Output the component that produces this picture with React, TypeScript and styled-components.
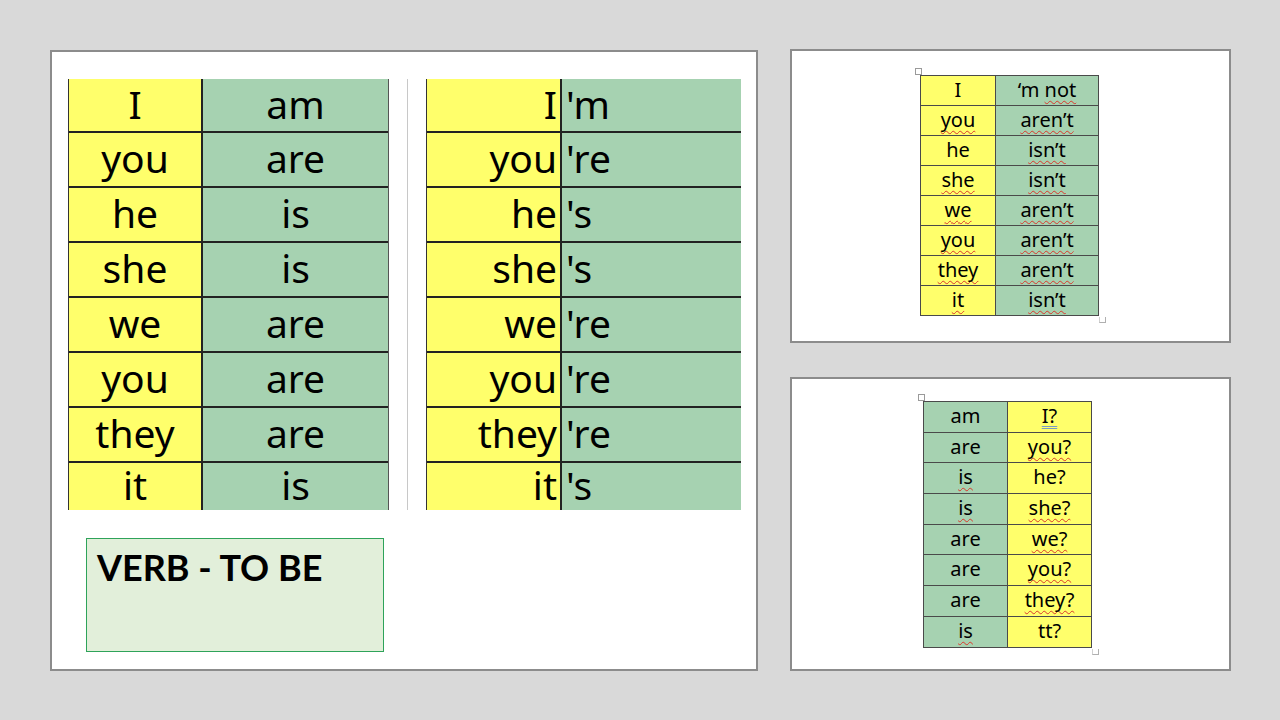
import React from 'react';
import styled, { createGlobalStyle } from 'styled-components';

const GlobalStyle = createGlobalStyle`
  html, body { margin: 0; padding: 0; }
  body {
    width: 1280px;
    height: 720px;
    overflow: hidden;
    background: #d9d9d9;
    font-family: "Comic Sans MS", "Noto Sans", sans-serif;
    color: #000;
  }
`;

const YELLOW = '#ffff6b';
const GREEN = '#a6d2b1';

type Mark = 'red' | 'blue' | undefined;

const pronouns = ['I', 'you', 'he', 'she', 'we', 'you', 'they', 'it'];
const forms = ['am', 'are', 'is', 'is', 'are', 'are', 'are', 'is'];
const shorts = ["'m", "'re", "'s", "'s", "'re", "'re", "'re", "'s"];

// [pronoun, mark, prefix, negative]
const negatives: [string, Mark, string, string][] = [
  ['I', undefined, '‘m ', 'not'],
  ['you', 'red', '', 'aren’t'],
  ['he', undefined, '', 'isn’t'],
  ['she', 'red', '', 'isn’t'],
  ['we', 'red', '', 'aren’t'],
  ['you', 'red', '', 'aren’t'],
  ['they', 'red', '', 'aren’t'],
  ['it', 'red', '', 'isn’t'],
];

const questions: [string, Mark, string, Mark][] = [
  ['am', undefined, 'I?', 'blue'],
  ['are', undefined, 'you?', 'red'],
  ['is', 'red', 'he?', undefined],
  ['is', 'red', 'she?', 'red'],
  ['are', undefined, 'we?', 'red'],
  ['are', undefined, 'you?', 'red'],
  ['are', undefined, 'they?', 'red'],
  ['is', 'red', 'tt?', undefined],
];

function App() {
  return (
    <>
      <GlobalStyle />
      <Slide>
        <Panel $w={708} $h={621}>
          <LeftContent>
            <TablesRow>
              <BigTable $w={321} $cols="134px 1fr" $right>
                {pronouns.map((p, i) => (
                  <React.Fragment key={i}>
                    <BigCell $bg={YELLOW} $first={i === 0} $divider>{p}</BigCell>
                    <BigCell $bg={GREEN} $first={i === 0}>{forms[i]}</BigCell>
                  </React.Fragment>
                ))}
              </BigTable>
              <Divider />
              <BigTable $w={315} $cols="135px 1fr">
                {pronouns.map((p, i) => (
                  <React.Fragment key={i}>
                    <BigCell $bg={YELLOW} $first={i === 0} $divider $align="right">{p}</BigCell>
                    <BigCell $bg={GREEN} $first={i === 0} $align="left">{shorts[i]}</BigCell>
                  </React.Fragment>
                ))}
              </BigTable>
            </TablesRow>
            <TitleBox>VERB - TO BE</TitleBox>
          </LeftContent>
        </Panel>

        <RightColumn>
          <Panel $w={441} $h={294}>
            <SmallArea $top={24} $shift={2}>
              <SmallWrap>
                <MoveHandle />
                <SmallTable $cols="75px 103px" $rowH={30}>
                  {negatives.map(([p, m, pre, neg], i) => (
                    <React.Fragment key={i}>
                      <SmallCell $bg={YELLOW}><Word $mark={m}>{p}</Word></SmallCell>
                      <SmallCell $bg={GREEN}>
                        {pre && <span>{pre}</span>}
                        <Word $mark="red">{neg}</Word>
                      </SmallCell>
                    </React.Fragment>
                  ))}
                </SmallTable>
                <Corner />
              </SmallWrap>
            </SmallArea>
          </Panel>
          <Panel $w={441} $h={294}>
            <SmallArea $top={22} $shift={6}>
              <SmallWrap>
                <MoveHandle />
                <SmallTable $cols="84px 84px" $rowH={30.7}>
                  {questions.map(([v, vm, q, qm], i) => (
                    <React.Fragment key={i}>
                      <SmallCell $bg={GREEN}><Word $mark={vm}>{v}</Word></SmallCell>
                      <SmallCell $bg={YELLOW}><Word $mark={qm}>{q}</Word></SmallCell>
                    </React.Fragment>
                  ))}
                </SmallTable>
                <Corner />
              </SmallWrap>
            </SmallArea>
          </Panel>
        </RightColumn>
      </Slide>
    </>
  );
}

export default App;

const Slide = styled.div`
  box-sizing: border-box;
  width: 1280px;
  height: 720px;
  padding: 50px 0 0 50px;
  display: flex;
  gap: 32px;
  align-items: flex-start;
`;

const RightColumn = styled.div`
  display: flex;
  flex-direction: column;
  gap: 34px;
  margin-top: -1px;
`;

const Panel = styled.div<{ $w: number; $h: number }>`
  box-sizing: border-box;
  width: ${p => p.$w}px;
  height: ${p => p.$h}px;
  background: #fff;
  border: 2px solid #8c8c8c;
`;

const LeftContent = styled.div`
  padding: 27px 0 0 16px;
  display: flex;
  flex-direction: column;
`;

const TablesRow = styled.div`
  display: flex;
  height: 431px;
`;

const Divider = styled.div`
  width: 1px;
  margin: 0 18px;
  background: #c8c8c8;
`;

const BigTable = styled.div<{ $w: number; $cols: string; $right?: boolean }>`
  box-sizing: border-box;
  width: ${p => p.$w}px;
  display: grid;
  grid-template-columns: ${p => p.$cols};
  grid-template-rows: 52px repeat(6, 55px) 49px;
  border-left: 1px solid #333;
  border-right: ${p => (p.$right ? '1px solid #555' : 'none')};
`;

const BigCell = styled.div<{ $bg: string; $first?: boolean; $divider?: boolean; $align?: 'left' | 'right' }>`
  background: ${p => p.$bg};
  border-top: ${p => (p.$first ? 'none' : '2px solid #222')};
  border-right: ${p => (p.$divider ? '2px solid #222' : 'none')};
  display: flex;
  align-items: center;
  justify-content: ${p => (p.$align === 'left' ? 'flex-start' : p.$align === 'right' ? 'flex-end' : 'center')};
  padding: ${p => (p.$align === 'left' ? '0 0 4px 4px' : p.$align === 'right' ? '0 3px 4px 0' : '0 0 4px 0')};
  font-size: 39px;
  line-height: 1;
`;

const TitleBox = styled.div`
  box-sizing: border-box;
  width: 298px;
  height: 114px;
  margin: 28px 0 0 18px;
  background: #e2efda;
  border: 1px solid #2ea35a;
  padding: 8px 0 0 10px;
  font-family: Lato, "Open Sans", sans-serif;
  font-weight: 700;
  font-size: 36px;
  line-height: 40px;
`;

const SmallArea = styled.div<{ $top: number; $shift: number }>`
  padding-top: ${p => p.$top}px;
  padding-right: ${p => p.$shift}px;
  display: flex;
  justify-content: center;
`;

const SmallWrap = styled.div`
  position: relative;
`;

const SmallTable = styled.div<{ $cols: string; $rowH: number }>`
  display: grid;
  grid-template-columns: ${p => p.$cols};
  grid-auto-rows: ${p => p.$rowH}px;
  border-top: 1px solid #4a4a4a;
  border-left: 1px solid #4a4a4a;
`;

const SmallCell = styled.div<{ $bg: string }>`
  background: ${p => p.$bg};
  border-right: 1px solid #4a4a4a;
  border-bottom: 1px solid #4a4a4a;
  display: flex;
  align-items: center;
  justify-content: center;
  font-size: 20px;
  line-height: 1;
  padding-bottom: 2px;
  white-space: pre;
`;

const Word = styled.span<{ $mark?: Mark }>`
  text-decoration: ${p =>
    p.$mark === 'red' ? 'underline wavy #d9362b' : p.$mark === 'blue' ? 'underline double #7a9cc4' : 'none'};
  text-decoration-thickness: 1px;
  text-underline-offset: 3px;
  text-decoration-skip-ink: none;
`;

const MoveHandle = styled.div`
  position: absolute;
  left: -5px;
  top: -7px;
  width: 5px;
  height: 5px;
  border: 1px solid #9a9a9a;
  background: #fff;
`;

const Corner = styled.div`
  position: absolute;
  right: -7px;
  bottom: -7px;
  width: 5px;
  height: 5px;
  border-right: 1px solid #b0b0b0;
  border-bottom: 1px solid #b0b0b0;
  border-left: 1px solid #d0d0d0;
`;
